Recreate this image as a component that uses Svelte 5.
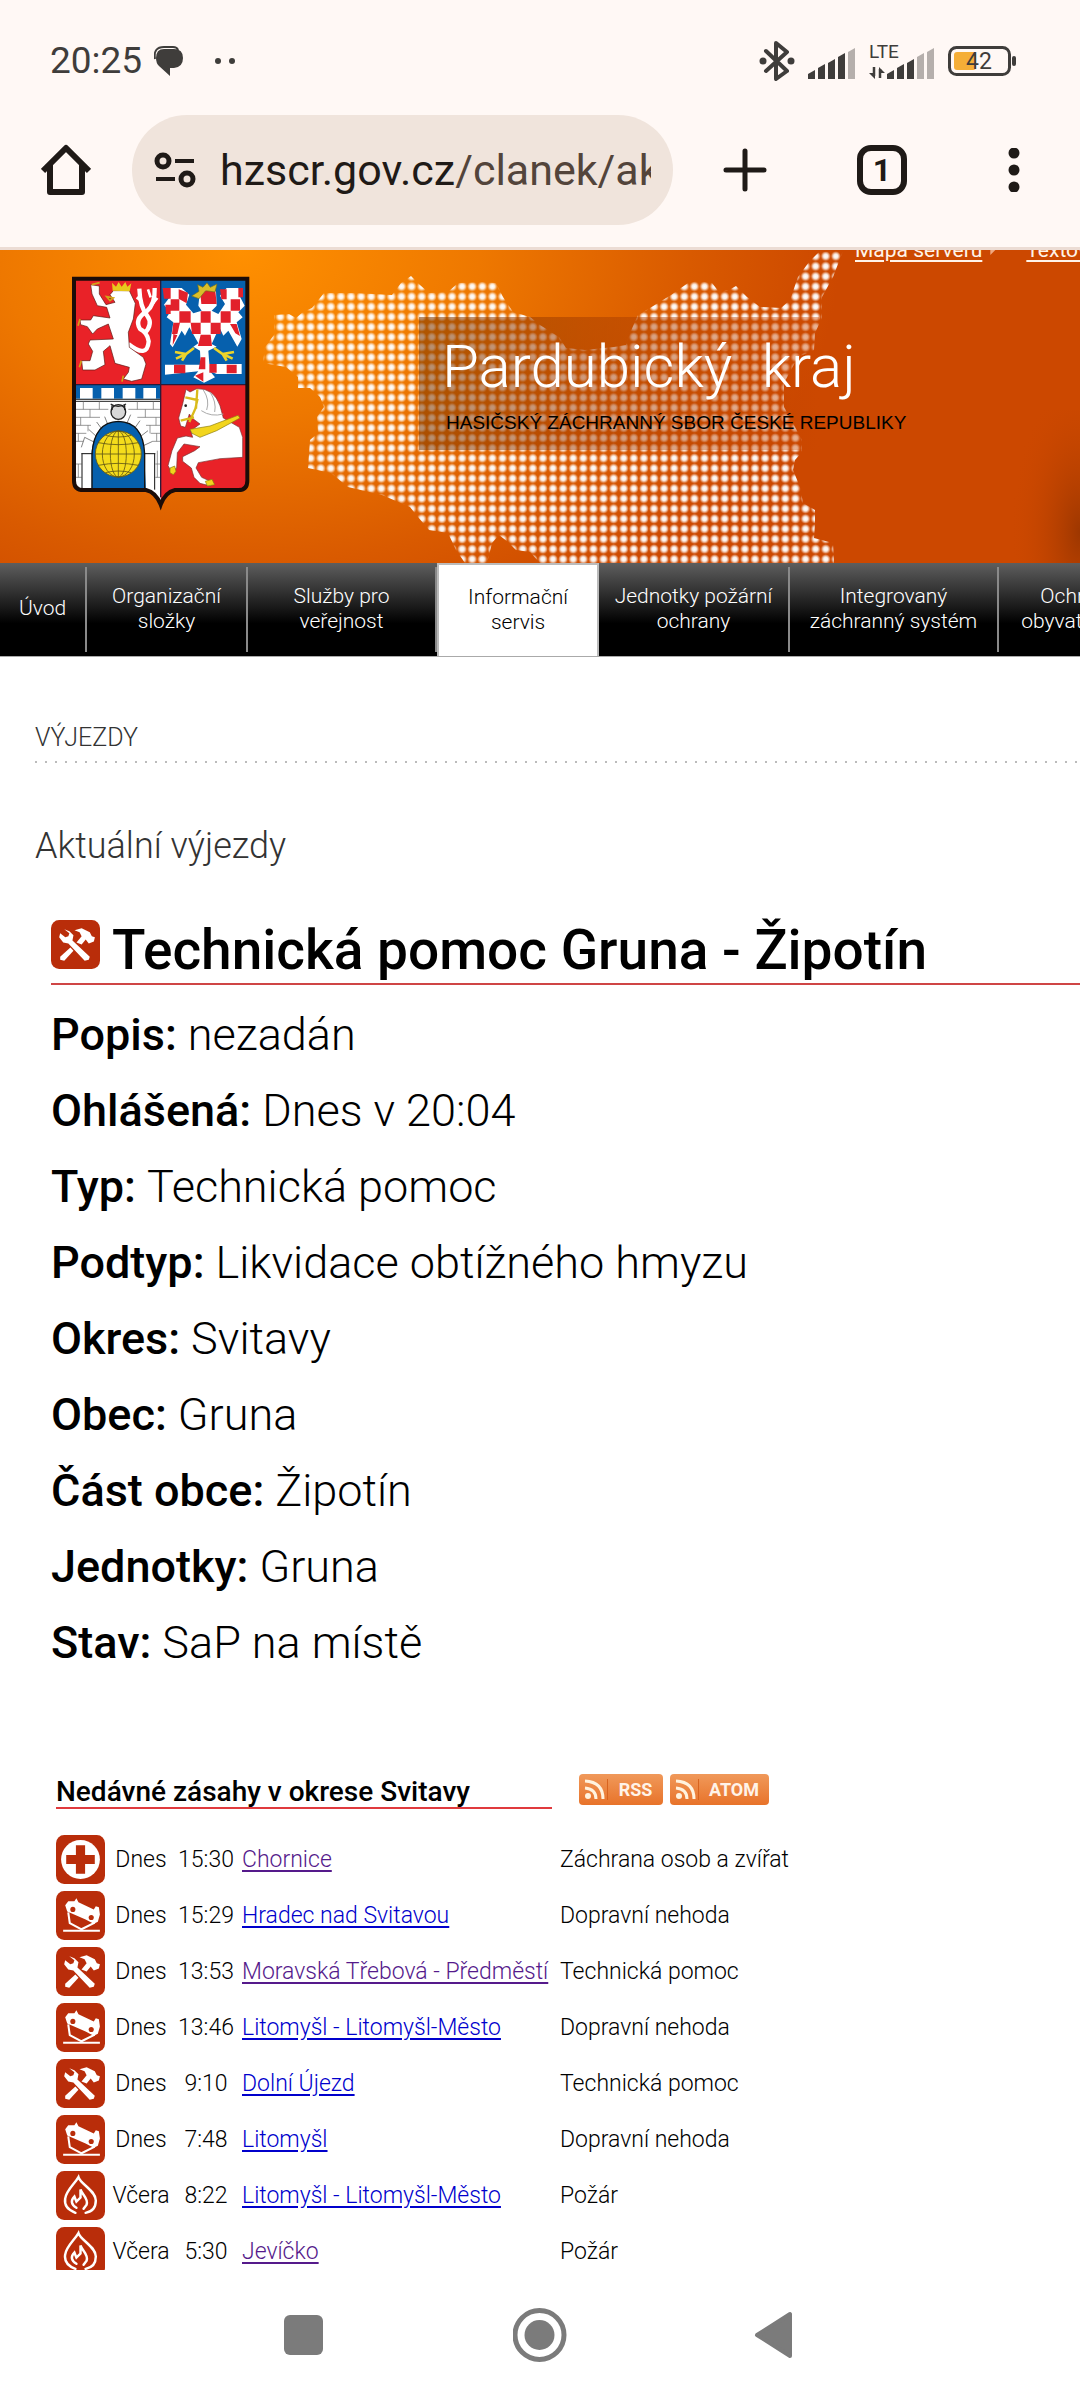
<script>
  const menu = [
    { lines: ['Úvod'], width: 87 },
    { lines: ['Organizační', 'složky'], width: 161 },
    { lines: ['Služby pro', 'veřejnost'], width: 189 },
    { lines: ['Informační', 'servis'], width: 162, active: true },
    { lines: ['Jednotky požární', 'ochrany'], width: 191 },
    { lines: ['Integrovaný', 'záchranný systém'], width: 209 },
    { lines: ['Ochrana', 'obyvatelstva'], width: 162 }
  ]

  const details = [
    ['Popis', 'nezadán'],
    ['Ohlášená', 'Dnes v 20:04'],
    ['Typ', 'Technická pomoc'],
    ['Podtyp', 'Likvidace obtížného hmyzu'],
    ['Okres', 'Svitavy'],
    ['Obec', 'Gruna'],
    ['Část obce', 'Žipotín'],
    ['Jednotky', 'Gruna'],
    ['Stav', 'SaP na místě']
  ]

  const events = [
    { icon: 'rescue', day: 'Dnes', time: '15:30', place: 'Chornice', type: 'Záchrana osob a zvířat', visited: true },
    { icon: 'crash', day: 'Dnes', time: '15:29', place: 'Hradec nad Svitavou', type: 'Dopravní nehoda' },
    { icon: 'tools', day: 'Dnes', time: '13:53', place: 'Moravská Třebová - Předměstí', type: 'Technická pomoc', visited: true },
    { icon: 'crash', day: 'Dnes', time: '13:46', place: 'Litomyšl - Litomyšl-Město', type: 'Dopravní nehoda' },
    { icon: 'tools', day: 'Dnes', time: '9:10', place: 'Dolní Újezd', type: 'Technická pomoc' },
    { icon: 'crash', day: 'Dnes', time: '7:48', place: 'Litomyšl', type: 'Dopravní nehoda' },
    { icon: 'fire', day: 'Včera', time: '8:22', place: 'Litomyšl - Litomyšl-Město', type: 'Požár' },
    { icon: 'fire', day: 'Včera', time: '5:30', place: 'Jevíčko', type: 'Požár', visited: true }
  ]

  const bars = [8, 14, 19, 25, 30]
</script>

{#snippet eventIcon(name)}
  <svg class="event-icon" viewBox="0 0 48 48" aria-hidden="true">
    <rect width="48" height="48" rx="8" fill="#b92d0a" />
    {#if name === 'rescue'}
      <circle cx="24" cy="24" r="19" fill="#fff" />
      <path d="M19.5 10h9v9.500h9.500v9h-9.500v9.500h-9v-9.500h-9.500v-9h9.500z" fill="#b92d0a" />
    {:else if name === 'crash'}
      <path d="M9 14L12 10L18 10L20 7L22 11L37 18L39 15L42 16L43 23L41 30L37 32L29 28L11 20Z" fill="#fff" />
      <circle cx="16.500" cy="18" r="2.500" fill="#b92d0a" />
      <circle cx="34.500" cy="26" r="2.500" fill="#b92d0a" />
      <path d="M12 21L13.500 31.500L25 37.500L38 31" fill="none" stroke="#fff" stroke-width="2" />
      <path d="M7 39h36" stroke="#fff" stroke-width="2" />
    {:else if name === 'tools'}
      <path d="M13 9l5 2 4 4-1 5 17 16-1 3-4 1-16-17-5-1-4-5 1-4 5 4 3-1 1-3z" fill="#fff" />
      <path d="M19 27l3 3-9 10-4-1v-3z" fill="#fff" />
      <path d="M25 22l5-6-2-4-5-2 7-2 8 4 2 4 3 1-1 4-5 2-3-4-4 5z" fill="#fff" />
    {:else}
      <path d="M19 41C11 38 8 33 9 27C10 19 18 13 22 6C24 13 39 19 39 29C39 36 35 40 29 41" fill="none" stroke="#fff" stroke-width="2.400" stroke-linecap="round" />
      <path d="M20 36C15 33 14 29 18 25L20 30L24 26V18C26 24 32 27 30 33L27 37" fill="none" stroke="#fff" stroke-width="2.400" stroke-linecap="round" />
    {/if}
  </svg>
{/snippet}

{#snippet signal(active)}
  {#each bars as h, i}
    <path d="M{i * 10} 37v-{h - 3}l7-4v{h + 1}z" fill={i < active ? '#3f3d3b' : '#b5afac'} />
  {/each}
{/snippet}

{#snippet feedIcon()}
  <svg width="28" height="25" viewBox="0 0 28 25" aria-hidden="true">
    <circle cx="9" cy="19" r="3" fill="#fff3df" />
    <path d="M6 11q11 1 11 11M6 4q18 1 18 18" fill="none" stroke="#fff3df" stroke-width="3" />
  </svg>
{/snippet}

<div class="phone">
  <div class="status">
    <span class="clock">20:25</span>
    <svg class="chat" width="29" height="30" viewBox="0 0 29 30">
      <path d="M10 3h10q9 0 9 9t-9 10h-4v8L5 20Q2 17 2 12q0-9 8-9z" fill="#3f3d3b" />
      <path d="M1 13Q-1 1 10 1h9q4 0 5 3" fill="none" stroke="#3f3d3b" stroke-width="2" />
    </svg>
    <svg width="24" height="8" viewBox="0 0 24 8">
      <circle cx="5" cy="4" r="3" fill="#3f3d3b" />
      <circle cx="19" cy="4" r="3" fill="#3f3d3b" />
    </svg>
    <div class="status-right">
      <svg width="36" height="40" viewBox="0 0 36 40" fill="none" stroke="#3f3d3b" stroke-width="4">
        <path d="M7 10l21 20-11 8V2l11 9L7 30" stroke-linejoin="round" stroke-linecap="round" />
        <circle cx="4" cy="20" r="3.500" fill="#3f3d3b" stroke="none" />
        <circle cx="32" cy="20" r="3.500" fill="#3f3d3b" stroke="none" />
      </svg>
      <svg width="48" height="38" viewBox="0 0 48 38">{@render signal(4)}</svg>
      <svg width="66" height="38" viewBox="0 0 66 38">
        <text x="0" y="16" class="lte">LTE</text>
        <path d="M5 25v9M11 36v-9" stroke="#3f3d3b" stroke-width="2.500" />
        <path d="M0 31h6v6zM10 25v6h6z" fill="#3f3d3b" />
        <g transform="translate(18 0)">{@render signal(3)}</g>
      </svg>
      <svg width="69" height="32" viewBox="0 0 69 32">
        <rect x="1.500" y="2.500" width="60" height="27" rx="7" fill="none" stroke="#3f3d3b" stroke-width="3" />
        <rect x="6" y="7" width="22" height="18" rx="3" fill="#f5ae37" />
        <rect x="64" y="11" width="4" height="10" rx="2" fill="#3f3d3b" />
        <text x="18" y="24" class="battery">42</text>
      </svg>
    </div>
  </div>

  <div class="toolbar">
    <button aria-label="Domů">
      <svg width="50" height="52" viewBox="0 0 50 52" fill="none" stroke="#1f1a17" stroke-width="6">
        <path d="M2 27L25 4l23 23M9 21v27h32V21" stroke-linejoin="round" />
      </svg>
    </button>
    <div class="omnibox">
      <svg width="42" height="36" viewBox="0 0 42 36" fill="none" stroke="#1f1a17" stroke-width="5">
        <circle cx="9" cy="9" r="6" />
        <path d="M21 9h19M2 27h19" stroke-width="4" />
        <circle cx="33" cy="27" r="6" />
      </svg>
      <a class="url" href="#top">hzscr.gov.cz<span>/clanek/aktualni</span></a>
    </div>
    <button class="new-tab" aria-label="Nová karta">
      <svg width="44" height="44" viewBox="0 0 44 44" stroke="#1f1a17" stroke-width="5" stroke-linecap="round">
        <path d="M22 3v38M3 22h38" />
      </svg>
    </button>
    <button class="tabs" aria-label="Karty">1</button>
    <button class="more" aria-label="Nabídka">
      <svg width="12" height="44" viewBox="0 0 12 44" fill="#1f1a17">
        <circle cx="6" cy="5" r="5.500" />
        <circle cx="6" cy="22" r="5.500" />
        <circle cx="6" cy="39" r="5.500" />
      </svg>
    </button>
  </div>

  <main class="page" id="top">
    <header class="hero">
      <svg class="hero-map" viewBox="0 0 1080 313" preserveAspectRatio="xMinYMin slice" aria-hidden="true">
        <defs>
          <radialGradient id="dot">
            <stop offset="0" stop-color="#fff" />
            <stop offset=".45" stop-color="#fff" stop-opacity=".9" />
            <stop offset="1" stop-color="#fff" stop-opacity=".05" />
          </radialGradient>
          <pattern id="dots" width="10.100" height="10.100" x="2.600" y="1.200" patternUnits="userSpaceOnUse">
            <circle cx="5" cy="5" r="4.900" fill="url(#dot)" />
          </pattern>
          <linearGradient id="shade">
            <stop offset="0" stop-color="#7a3600" stop-opacity=".55" />
            <stop offset=".4" stop-color="#a03a00" stop-opacity=".5" />
            <stop offset="1" stop-color="#cc4800" stop-opacity=".4" />
          </linearGradient>
          <radialGradient id="figure" cx="1" cy=".8" r="1">
            <stop offset="0" stop-color="#7e2b00" stop-opacity=".6" />
            <stop offset="1" stop-color="#cc4800" stop-opacity="0" />
          </radialGradient>
        </defs>
        <path
          d="M263 113L265 97 274 85V65L289 64 296 68 303 62 312 58 324 43H355L392 45 401 33 411 26 420 35 429 43 448 42 458 33 482 32 496 33 503 47 513 62 530 67 540 75 559 87 566 98 585 100 614 97 626 95 630 83 638 65 650 58 671 45 688 33 698 31 712 33 719 42 729 40 736 36 747 47 760 57 781 58 790 50 798 27 809 12 819 2 843 1 833 27 822 47V68L815 83 814 100 798 107 784 133V157L795 177 802 190V202L795 210 793 220 800 237 803 253 815 260V273L814 288 833 293 834 313H540L530 302 516 300 508 292 499 285 492 293 487 313H465L456 300 448 283 429 280 418 267 410 257 382 245 348 237 331 223 308 218 310 190 318 183 317 167 324 157 320 147 310 138H298V127L286 117z"
          fill="url(#dots)"
        />
        <rect x="419" y="67" width="400" height="133" fill="url(#shade)" />
        <rect x="1010" y="160" width="70" height="153" fill="url(#figure)" />
      </svg>

      <div class="top-links">
        <a href="#map">Mapa serveru</a>
        <span class="arrow"></span>
        <a href="#text">Textová verze</a>
      </div>

      <div class="brand">
        <svg class="crest" width="200" height="250" viewBox="0 0 600 750" aria-label="Znak Pardubického kraje">
          <clipPath id="shield">
            <path d="M42 44H562V650Q562 678 535 678H345Q315 685 302 722Q288 685 258 678H70Q42 678 42 650z" />
          </clipPath>
          <g clip-path="url(#shield)">
            <rect x="40" y="40" width="262" height="322" fill="#e92228" />
            <rect x="302" y="40" width="262" height="322" fill="#0660ad" />
            <rect x="40" y="362" width="262" height="370" fill="#0660ad" />
            <rect x="302" y="362" width="262" height="370" fill="#e92228" />

            <!-- lion -->
            <g fill="none" stroke="#fff" stroke-width="13" stroke-linejoin="round">
              <path d="M205 240Q262 285 266 232Q262 205 240 195Q222 165 260 142Q286 120 284 72M254 208Q280 180 262 156Q240 130 238 74" />
              <path d="M272 100l-8-24M276 122l16-20M246 112l-16-12" stroke-width="8" />
            </g>
            <g fill="#fff" stroke="#5b1a14" stroke-width="2" stroke-linejoin="round">
              <path d="M150 92L160 80H208L226 118 220 165 205 205 208 250 250 280 258 300 245 345 215 352 190 345 205 325 208 310 165 298 150 245 130 262 135 302 105 318 68 318 65 290 90 290 98 262 85 240 90 228 160 225 145 180 112 195 98 210 82 188 62 182 60 168 92 168 100 155 150 162 140 130 112 125 96 90 92 62 118 66 118 90 138 122 165 115z" />
            </g>
            <path d="M158 80l-2-24 12 12 8-14 9 14 11-14 6 14 12-10-5 24z" fill="#e8c81c" />
            <path d="M140 98l20 4-10 8zM60 165l-6 20M64 290l-6 20M190 335l-4 18M95 62l24-6" fill="#8b2b10" stroke="#d1a419" stroke-width="5" />

            <!-- eagle -->
            <path d="M308 72H365L388 92 378 122 400 148 425 140 415 125 420 82 440 72 468 82 470 125 455 140 475 150 495 120 480 95 500 72H548L540 98 554 125 535 145 548 160 530 175 545 225 532 248 505 200 490 215 478 190 455 240 470 248 445 260 448 300H545V330H470L450 322 465 340 432 356 400 340 415 322 315 332V302H422L420 260 400 248 415 238 388 190 375 215 365 200 338 250 330 240 340 175 320 160 330 145 312 122 330 98z" fill="#fff" />
            <path d="M308 72h24v32h-20zM356 76l28 10-4 32-24-14zM332 106h26v34h-26zM316 122h16v28h-14zM358 142h34v34h-34zM392 176h30v34h-26zM422 142h30v34h-30zM452 176h30v34h-30zM482 142h30v34h-30zM512 106h28v34h-28zM480 76h20v30h-16zM535 72h14v28h-14zM340 176h20l-8 34h-16zM420 80h46l4 40h-46zM510 180h20l10 36-14-8zM422 212h30l4 34h-42zM340 210l12 4-14 30zM342 302h34v26h-34zM500 302h30v26h-30zM422 280h14v36h-20zM448 300h22v26h-22zM405 335l25-10v28z" fill="#e2202b" />
            <path d="M395 96l22-14-4-20 16 8 12-14 10 14 20-10-6 24-28-4-20 24z" fill="#d9bf2a" stroke="#6e6d1c" stroke-width="2" />
            <path d="M402 252L378 270L345 264M378 270L348 284M378 270L366 290M462 252L488 270L522 264M488 270L518 284M488 270L500 290" fill="none" stroke="#ecd42b" stroke-width="8" />

            <!-- gate -->
            <path d="M45 404H302V720L258 680 252 560Q240 480 175 472Q105 480 95 560V680H45z" fill="#fff" />
            <path d="M60 372h38v32h-38zM124 372h38v32h-38zM188 372h38v32h-38zM250 372h38v32h-38z" fill="#fff" />
            <path d="M45 406H302M45 412H302" stroke="#222" stroke-width="3" />
            <path d="M45 436h100M205 436h97M45 460h75M232 460h70M45 484h48M258 484h44M45 508h34M272 508h30M45 532h25M278 532h24M45 600h20M286 600h16M45 640h20M286 640h16M70 412v24M118 412v24M90 436v24M62 460v24M84 484v18M232 412v24M280 412v24M256 436v24M288 460v24M270 484v24M290 508v24M55 508v24M55 600v40M292 560v80" stroke="#666" stroke-width="2" />
            <path d="M64 550l10-30 28 14M86 496l26 24M110 474l22 30M134 458l12 30M212 452l-14 32M240 470l-24 34M264 500l-26 20M278 532l-30 14" stroke="#444" stroke-width="2" fill="none" />
            <path d="M96 678V570Q102 474 175 472Q250 474 254 570V678" fill="#0660ad" stroke="#111" stroke-width="4" />
            <path d="M64 569h34M252 569h34M66 569v108M284 569v108" stroke="#111" stroke-width="3" />
            <circle cx="175" cy="444" r="22" fill="#d8d8d8" stroke="#222" stroke-width="4" />
            <path d="M152 420q22 14 46 0M156 424v14M194 424v14" fill="none" stroke="#222" stroke-width="4" />
            <g stroke="#625715" stroke-width="2.500">
              <circle cx="175" cy="570" r="69" fill="#f4dc1c" />
              <g fill="none">
                <ellipse cx="175" cy="570" rx="48" ry="69" />
                <ellipse cx="175" cy="570" rx="24" ry="69" />
                <path d="M175 501v138M106 570h138M115 536q60 12 120 0M115 604q60-12 120 0M136 514q40 10 78 0M136 626q40-10 78 0" />
              </g>
            </g>

            <!-- horse -->
            <path d="M378 376L390 384L410 374Q462 372 480 425L490 462L538 490L548 520V580L480 584L415 596L408 612L425 640L458 655L452 666L420 658L402 640L394 612L368 592V578L404 560L420 548L372 540L352 566L350 612L334 622L324 605L336 560L352 522L378 516L398 520L392 500L420 480L396 462L388 450L376 490L362 486L356 462L368 420Z" fill="#fff" stroke="#733" stroke-width="2" />
            <path d="M390 496l60-10 84-32 6 8-70 38-50 20-24-12zM330 612l14-6 4 16-8 10-10-6zM436 652l20-6 8 16-22 4z" fill="#f2d51d" stroke="#8a7a10" stroke-width="2" />
            <path d="M376 400l36 8-6 26-18 40M412 376l-4 58M362 470l40-10" fill="none" stroke="#d9bb1b" stroke-width="7" />
            <path d="M430 378q20 30 10 60M450 384q20 30 14 60M424 440q30 20 66 10" fill="none" stroke="#aaa" stroke-width="3" />
            <circle cx="377" cy="425" r="4" fill="#222" />
          </g>
          <path d="M302 44V700M42 362H562" stroke="#2a1a3a" stroke-width="4" />
          <path d="M42 44H562V650Q562 678 535 678H345Q315 685 302 722Q288 685 258 678H70Q42 678 42 650z" fill="none" stroke="#1b0c08" stroke-width="12" />
        </svg>
        <div class="brand-text">
          <p class="region">Pardubický&nbsp; kraj</p>
          <p class="org">HASIČSKÝ ZÁCHRANNÝ SBOR ČESKÉ REPUBLIKY</p>
        </div>
      </div>
    </header>

    <nav class="menu">
      {#each menu as item}
        <a href="#menu" class:active={item.active} style="width: {item.width}px">
          <span>{#each item.lines as line, i}{#if i}<br />{/if}{line}{/each}</span>
        </a>
      {/each}
    </nav>

    <div class="content">
      <h2 class="section">VÝJEZDY</h2>
      <p class="lead">Aktuální výjezdy</p>

      <article class="incident">
        <h1>{@render eventIcon('tools')}Technická pomoc Gruna - Žipotín</h1>
        <dl>
          {#each details as [label, value]}
            <div>
              <dt>{label}:</dt>
              <dd>{value}</dd>
            </div>
          {/each}
        </dl>
      </article>

      <section class="recent">
        <div class="recent-head">
          <h3>Nedávné zásahy v okrese Svitavy</h3>
          <a class="feed" href="#rss">{@render feedIcon()}<span>RSS</span></a>
          <a class="feed atom" href="#atom">{@render feedIcon()}<span>ATOM</span></a>
        </div>
        <table>
          <tbody>
            {#each events as e}
              <tr>
                <td class="icon">{@render eventIcon(e.icon)}</td>
                <td class="day">{e.day}</td>
                <td class="time">{e.time}</td>
                <td class="place"><a href="#detail" class:visited={e.visited}>{e.place}</a></td>
                <td class="type">{e.type}</td>
              </tr>
            {/each}
          </tbody>
        </table>
      </section>
    </div>
  </main>

  <div class="system-nav">
    <button aria-label="Poslední aplikace">
      <svg width="54" height="54" viewBox="0 0 54 54"><rect x="7" y="7" width="39" height="40" rx="6" fill="#7b7b7b" /></svg>
    </button>
    <button aria-label="Plocha">
      <svg width="54" height="54" viewBox="0 0 54 54">
        <circle cx="26.500" cy="27" r="24.500" fill="none" stroke="#7b7b7b" stroke-width="5" />
        <circle cx="26.500" cy="27" r="15" fill="#7b7b7b" />
      </svg>
    </button>
    <button aria-label="Zpět">
      <svg width="54" height="54" viewBox="0 0 54 54">
        <path d="M8 27L41 6v42z" fill="#7b7b7b" stroke="#7b7b7b" stroke-width="4" stroke-linejoin="round" />
      </svg>
    </button>
  </div>
</div>

<style>
  :global(body) {
    margin: 0;
    background: #fff;
  }

  .phone {
    display: flex;
    flex-direction: column;
    height: 100vh;
    overflow: hidden;
    font-family: Roboto, 'Noto Sans', sans-serif;
    font-weight: 300;
    color: #000;
  }

  h1,
  h2,
  h3,
  p,
  dl,
  dd {
    margin: 0;
  }

  svg {
    display: block;
    flex: none;
  }

  button {
    display: flex;
    padding: 0;
    border: 0;
    background: none;
    font-family: inherit;
  }

  .status {
    display: flex;
    align-items: center;
    height: 78px;
    padding: 22px 63px 0 50px;
    background: #fff8f5;
    color: #3f3d3b;
  }

  .clock {
    font-size: 37px;
    font-weight: 400;
    line-height: 44px;
  }

  .chat {
    margin: 0 30px 0 12px;
  }

  .status-right {
    display: flex;
    align-items: center;
    gap: 13px;
    margin-left: auto;
  }

  .lte {
    font-size: 19px;
    font-weight: 400;
    fill: #3f3d3b;
  }

  .battery {
    font-size: 23px;
    font-weight: 400;
    fill: #3f3d3b;
  }

  .toolbar {
    display: flex;
    align-items: center;
    height: 140px;
    padding: 0 60px 7px 41px;
    border-bottom: 3px solid #ecdcd4;
    background: #fff8f5;
  }

  .omnibox {
    display: flex;
    flex: 1;
    align-items: center;
    gap: 24px;
    min-width: 0;
    height: 110px;
    margin-left: 41px;
    padding: 0 22px;
    border-radius: 55px;
    background: #f0e4dc;
  }

  .url {
    flex: 1;
    overflow: hidden;
    color: #1f1a17;
    font-size: 43px;
    font-weight: 400;
    line-height: 60px;
    text-decoration: none;
    white-space: nowrap;
  }

  .url span {
    color: #53443b;
  }

  .new-tab {
    margin: 0 90px 0 50px;
  }

  .tabs {
    align-items: center;
    justify-content: center;
    width: 50px;
    height: 50px;
    border: 6px solid #1f1a17;
    border-radius: 14px;
    color: #1f1a17;
    font-size: 32px;
    font-weight: 700;
  }

  .more {
    margin-left: 101px;
  }

  .page {
    flex: 1;
    min-height: 0;
    overflow: hidden;
  }

  .hero {
    position: relative;
    height: 313px;
    overflow: hidden;
    background: radial-gradient(ellipse 600px 420px at 240px 0, #ff9000 0, #ee7800 40%, #d95a00 75%, #cc4800 100%);
  }

  .hero-map {
    position: absolute;
    top: 0;
    left: 0;
    width: 1080px;
    height: 313px;
  }

  .top-links {
    position: relative;
    display: flex;
    gap: 8px;
    height: 28px;
    margin: -14px 0 0 855px;
    font-size: 21px;
    line-height: 28px;
    white-space: nowrap;
  }

  .top-links a {
    color: #fff3e8;
    font-weight: 400;
    text-underline-offset: 3px;
  }

  .arrow::before {
    content: '';
    display: block;
    width: 6px;
    height: 12px;
    margin: 7px 22px 0 0;
    background: #f0a880;
    clip-path: polygon(0 0, 100% 50%, 0 100%);
  }

  .brand {
    position: relative;
    display: flex;
    padding-left: 60px;
  }

  .brand-text {
    padding: 67px 0 0 182px;
    white-space: nowrap;
  }

  .region {
    color: #fff;
    font-size: 60px;
    font-weight: 300;
    line-height: 72px;
  }

  .org {
    padding-left: 4px;
    font-family: 'Liberation Sans', Arial, sans-serif;
    font-size: 19px;
    font-weight: 400;
    line-height: 40px;
  }

  .menu {
    display: flex;
    height: 93px;
    overflow: hidden;
    border-bottom: 1px solid #aaa;
    background: linear-gradient(#5e5e5e, #000 65%);
  }

  .menu a {
    display: flex;
    flex: none;
    align-items: center;
    justify-content: center;
    box-sizing: border-box;
    margin: 4px 0;
    padding-bottom: 2px;
    border-right: 2px solid #8a8a8a;
    color: #fff;
    font-size: 21px;
    line-height: 25px;
    text-align: center;
    text-decoration: none;
    white-space: nowrap;
  }

  .menu .active {
    margin: 0;
    border: 2px solid #bbb;
    border-bottom: 0;
    background: #fff;
    color: #000;
  }

  .content {
    padding-left: 35px;
  }

  .section {
    padding: 64px 0 8px;
    background: repeating-linear-gradient(90deg, #bbb 0 2px, transparent 2px 10px) left bottom / 100% 2px no-repeat;
    color: #333;
    font-size: 25px;
    font-weight: 300;
    line-height: 34px;
  }

  .lead {
    padding-top: 59px;
    color: #333;
    font-size: 36px;
    line-height: 48px;
  }

  .incident {
    padding: 46px 0 0 16px;
  }

  .incident h1 {
    display: flex;
    align-items: center;
    gap: 12px;
    height: 67px;
    border-bottom: 2px solid #cf4545;
    font-size: 55px;
    font-weight: 500;
    white-space: nowrap;
  }

  .event-icon {
    width: 49px;
    height: 49px;
  }

  h1 .event-icon {
    align-self: flex-start;
    margin-top: 4px;
  }

  dl {
    padding-top: 12px;
  }

  dl div {
    display: flex;
    gap: 11px;
    font-size: 45px;
    line-height: 76px;
  }

  dt {
    font-weight: 500;
  }

  .recent {
    padding: 93px 0 0 21px;
  }

  .recent-head {
    display: flex;
    align-items: flex-end;
  }

  .recent-head h3 {
    width: 496px;
    margin-right: 27px;
    border-bottom: 2px solid #e03a3e;
    font-size: 28px;
    font-weight: 500;
    line-height: 30px;
  }

  .feed {
    display: flex;
    align-items: center;
    width: 84px;
    height: 31px;
    margin: 0 7px 4px 0;
    border-radius: 4px;
    background: linear-gradient(#f0995a, #e8732a);
    color: #fff3e8;
    font-size: 18px;
    font-weight: 700;
    text-decoration: none;
  }

  .feed span {
    flex: 1;
    border-left: 1px solid #d8641f;
    text-align: center;
  }

  .atom {
    width: 99px;
  }

  table {
    margin-top: 22px;
    border-collapse: collapse;
    font-size: 23px;
    white-space: nowrap;
  }

  td {
    height: 56px;
    padding: 0;
  }

  .icon {
    width: 49px;
  }

  .day {
    width: 72px;
    text-align: center;
  }

  .time {
    width: 58px;
    text-align: center;
  }

  .place {
    width: 311px;
    padding-left: 7px;
  }

  .type {
    padding-left: 7px;
  }

  .place a {
    color: #0000cc;
    text-underline-offset: 3px;
  }

  .place .visited {
    color: #551a8b;
  }

  .system-nav {
    display: flex;
    align-items: center;
    justify-content: center;
    gap: 182px;
    height: 130px;
    background: #fff;
  }
</style>
